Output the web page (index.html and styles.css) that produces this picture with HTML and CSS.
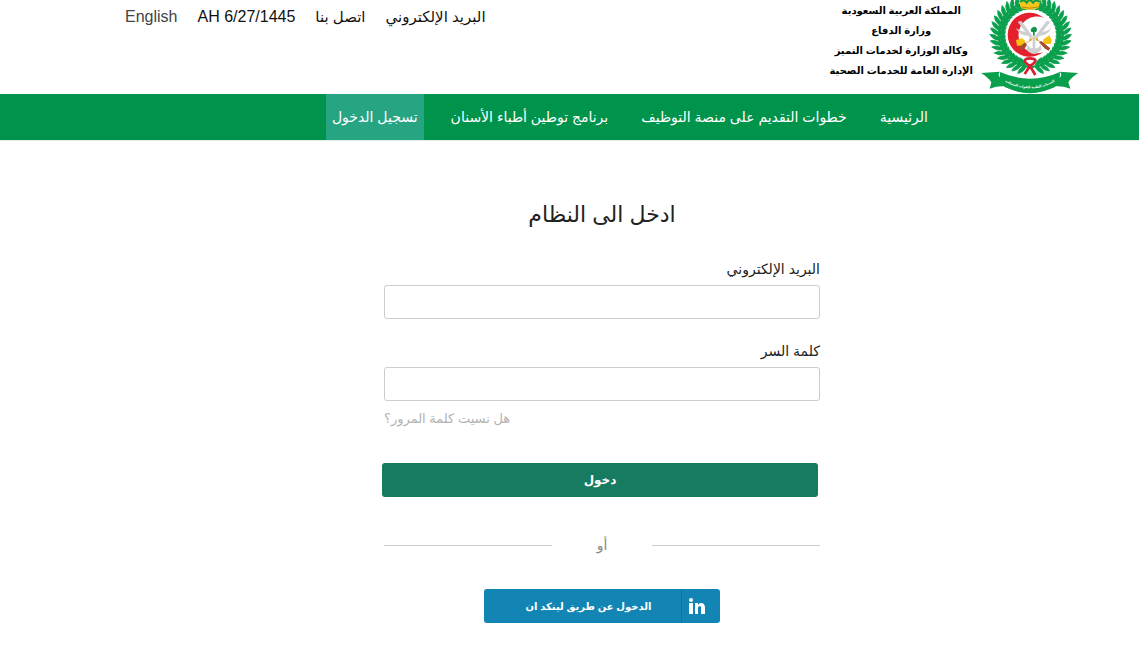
FILE: index.html
```html
<!DOCTYPE html>
<html lang="ar" dir="rtl">
<head>
<meta charset="utf-8">
<meta name="viewport" content="width=device-width, initial-scale=1">
<title>تسجيل الدخول</title>
<link rel="stylesheet" href="styles.css">
</head>
<body>
<header class="top">
  <div class="brand">
    <svg class="emblem" viewBox="21 0 294 282" role="img" aria-label="الخدمات الطبية للقوات المسلحة">
      <defs>
        <g id="leaf">
          <path d="M168 8Q172 -10 190 -17Q190 -1 173 9ZM168 8Q174 26 192 31Q190 15 173 7Z" stroke="#0a9f4c" stroke-width="2"/>
          <path d="M158 8H182" stroke="#0a9f4c" stroke-width="6"/>
        </g>
        <g id="branch" fill="#0a9f4c">
          <use href="#leaf" transform="rotate(-18 170 104)"/><use href="#leaf" transform="rotate(-27 170 104)"/>
          <use href="#leaf" transform="rotate(-36 170 104)"/><use href="#leaf" transform="rotate(-45 170 104)"/>
          <use href="#leaf" transform="rotate(-54 170 104)"/><use href="#leaf" transform="rotate(-63 170 104)"/>
          <use href="#leaf" transform="rotate(-72 170 104)"/><use href="#leaf" transform="rotate(-81 170 104)"/>
          <use href="#leaf" transform="rotate(-90 170 104)"/><use href="#leaf" transform="rotate(-99 170 104)"/>
          <use href="#leaf" transform="rotate(-108 170 104)"/><use href="#leaf" transform="rotate(-117 170 104)"/>
          <use href="#leaf" transform="rotate(-126 170 104)"/><use href="#leaf" transform="rotate(-135 170 104)"/>
          <use href="#leaf" transform="rotate(-144 170 104)"/><use href="#leaf" transform="rotate(-153 170 104)"/>
          <use href="#leaf" transform="rotate(-162 170 104)"/><use href="#leaf" transform="rotate(-171 170 104)"/>
        </g>
        <path id="scroll" d="M84 240Q168 290 252 240"/>
      </defs>
      <use href="#branch"/>
      <use href="#branch" transform="translate(340 0) scale(-1 1)"/>
      <path d="M134 0H200L193 25Q167 33 141 25Z" fill="#f5c518"/>
      <path d="M138 6Q150 -4 158 8Q167 -6 177 8Q187 -4 197 6" fill="none" stroke="#0a9f4c" stroke-width="6"/>
      <path d="M142 21Q167 28 192 21" fill="none" stroke="#b98a12" stroke-width="3"/>
      <path d="M210 54A66 66 0 1 0 208 156A55 55 0 1 1 210 54Z" fill="#e3202b"/>
      <g fill="#cfcfd1">
        <path d="M131 65L142 63L177 110L170 116Z"/><path d="M229 65L218 63L182 110L189 116Z"/>
        <path d="M126 84Q138 109 166 107L160 96Q142 96 126 84ZM232 84Q220 109 193 107L199 96Q217 96 232 84Z"/>
        <path d="M176 112H184V145Q194 145 200 134L203 148Q193 161 180 162Q166 161 157 148L161 134Q166 145 176 145Z"/>
      </g>
      <path d="M149 136L181 111L216 140" fill="none" stroke="#e9c98d" stroke-width="4"/>
      <path d="M126 120L144 115L153 122L151 137L129 137ZM207 119L226 106L233 119L230 132L209 132Z" fill="#f4c20d"/>
      <path d="M133 144L153 127L159 135L148 151ZM195 127L202 123L229 145L224 152L213 146Z" fill="#a34b2e"/>
      <path d="M166 114L175 120L167 124ZM184 119L192 114V124Z" fill="#e59a1d"/>
      <path d="M180 80Q190 81 189 91Q187 98 182 96V107H177V96Q170 98 170 90Q171 82 180 80Z" fill="#11944a"/>
      <path d="M21 219L78 215Q69 224 79 233Q168 260 257 233Q267 224 257 215L313 219Q291 232 283 247L289 266Q267 258 245 259Q168 300 91 259Q68 258 47 266L52 247Q43 232 21 219Z" fill="#0a9f4c"/>
      <path d="M78 216Q168 256 258 216L257 235L243 261Q168 295 92 261L78 235Z" fill="#0a9f4c"/>
      <path d="M168 198Q145 184 156 177Q168 173 180 177Q192 184 168 198L152 222M168 198L184 225" fill="none" stroke="#d71f31" stroke-width="8"/>
      <text class="scroll-text" text-anchor="middle"><textPath href="#scroll" startOffset="50%">الخدمات الطبية للقوات المسلحة</textPath></text>
    </svg>
    <p class="ministry">المملكة العربية السعودية<br>وزارة الدفاع<br>وكالة الوزارة لخدمات التميز<br>الإدارة العامة للخدمات الصحية</p>
  </div>
  <div class="tools">
    <a href="#">البريد الإلكتروني</a>
    <a href="#">اتصل بنا</a>
    <span class="latin" dir="ltr">AH 6/27/1445</span>
    <a class="latin lang" href="#" lang="en">English</a>
  </div>
</header>
<nav class="menu">
  <a href="#">الرئيسية</a>
  <a href="#">خطوات التقديم على منصة التوظيف</a>
  <a href="#">برنامج توطين أطباء الأسنان</a>
  <a class="active" href="#">تسجيل الدخول</a>
</nav>
<main class="page">
  <form class="login">
    <h1>ادخل الى النظام</h1>
    <label for="email">البريد الإلكتروني</label>
    <input id="email" type="email">
    <label for="password">كلمة السر</label>
    <input id="password" type="password">
    <a class="forgot" href="#">هل نسيت كلمة المرور؟</a>
    <button class="submit" type="submit">دخول</button>
    <div class="or"><span>أو</span></div>
    <button class="linkedin" type="button">
      <span class="mark"><svg viewBox="0 0 16 16" aria-hidden="true"><circle cx="2" cy="2" r="2"/><path d="M0 5H4V16H0ZM6 5H9V7Q10 5 12 5Q16 5 16 10V16H12V10Q12 8 11 8Q9 8 9 10V16H6Z"/></svg></span>
      <span class="caption">الدخول عن طريق لينكد ان</span>
    </button>
  </form>
</main>
</body>
</html>
```
FILE: styles.css
```css
* { box-sizing: border-box; }
body {
  margin: 0;
  background: #fff;
  color: #222;
  font-family: "Liberation Sans", "DejaVu Sans", sans-serif;
  font-size: 14px;
}
a { color: inherit; text-decoration: none; }
button { border: 0; padding: 0; color: #fff; font-family: inherit; font-weight: 700; cursor: pointer; }

.top {
  display: flex;
  justify-content: space-between;
  align-items: flex-start;
  min-height: 94px;
  padding: 0 60px 0 125px;
  color: #111;
}
.brand { display: flex; gap: 8px; }
.emblem { width: 98px; height: 94px; }
.scroll-text { fill: #fff; font-size: 10px; font-weight: 700; }
.ministry { margin: 0; padding-top: 1px; font-size: 10px; font-weight: 700; line-height: 20px; text-align: center; color: #000; }
.tools { display: flex; gap: 20px; padding-top: 7px; font-size: 15px; line-height: 20px; white-space: nowrap; }
.latin { font-size: 16px; }
.lang { color: #444; }

.menu {
  display: flex;
  gap: 21px;
  padding: 0 205px;
  background: #00934c;
  border-bottom: 1px solid #ddeee5;
  color: #fff;
  font-size: 14px;
  line-height: 46px;
  white-space: nowrap;
}
.menu a { padding: 0 6px; }
.menu .active { background: #27a583; }

.page { display: flex; justify-content: center; padding: 56px 0 36px 65px; }
.login { display: flex; flex-direction: column; width: 436px; }
.login h1 { margin: 0 0 22px; font-size: 22px; font-weight: 400; line-height: 36px; text-align: center; }
.login label { margin-bottom: 2px; line-height: 28px; }
.login input {
  height: 34px;
  margin-bottom: 18px;
  padding: 0 12px;
  border: 1px solid #ccc;
  border-radius: 3px;
  background: #fff;
  font: inherit;
}
.login #password { margin-bottom: 8px; }
.forgot { align-self: flex-end; color: #b3b3b3; font-size: 13px; line-height: 20px; }
.submit { height: 34px; margin: 34px 2px 34px -2px; border-radius: 3px; background: #177b62; font-size: 12px; }
.or { display: flex; align-items: center; color: #888; line-height: 28px; }
.or::before, .or::after { content: ""; flex: 1; border-top: 1px solid #ccc; }
.or span { width: 100px; text-align: center; }
.linkedin { display: flex; align-items: center; align-self: center; width: 236px; height: 34px; margin-top: 30px; border-radius: 3px; background: #1285b4; font-size: 10px; }
.mark { display: grid; place-items: center; width: 39px; height: 34px; padding-right: 8px; border-left: 1px solid #0f75a0; }
.mark svg { width: 16px; height: 16px; fill: #fff; }
.caption { flex: 1; text-align: center; padding-left: 12px; }
```
